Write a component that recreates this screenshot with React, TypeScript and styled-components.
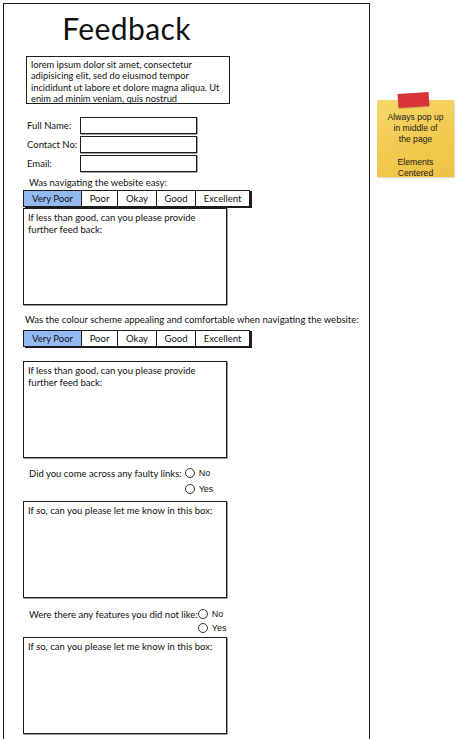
import React from "react";
import styled, { createGlobalStyle } from "styled-components";

const Global = createGlobalStyle`
  html, body { margin: 0; padding: 0; background: #fff; }
  body { font-family: "Lato", "Noto Sans", sans-serif; color: #111; overflow: hidden; }
`;

const Page = styled.div`
  display: flex;
  align-items: flex-start;
  width: 457px;
  height: 739px;
  overflow: hidden;
`;

const Frame = styled.div`
  margin: 3px 0 0 3px;
  width: 367px;
  height: 780px;
  border: 1.5px solid #1c1c1c;
  border-bottom: none;
  box-sizing: border-box;
  padding-left: 19px;
  display: flex;
  flex-direction: column;
  align-items: flex-start;
  font-size: 9.5px;
`;

const Title = styled.h1`
  margin: 7px 0 0 0;
  width: 207px;
  text-align: center;
  font-family: "Lato", sans-serif;
  font-weight: 400;
  font-size: 30px;
  line-height: 34px;
  letter-spacing: 0.4px;
`;

const Intro = styled.div`
  margin: 11px 0 0 3px;
  width: 204px;
  height: 48px;
  box-sizing: border-box;
  border: 1.5px solid #1c1c1c;
  padding: 2px 4px;
  font-size: 9.3px;
  line-height: 11.4px;
`;

const Fields = styled.div`
  margin-top: 13px;
  display: grid;
  grid-template-columns: 57px 117px;
  row-gap: 2px;
  align-items: center;
`;

const FieldLabel = styled.label`
  padding-left: 4px;
  font-size: 9.5px;
  white-space: nowrap;
`;

const Input = styled.div`
  height: 17px;
  box-sizing: border-box;
  border: 1.5px solid #1c1c1c;
  box-shadow: 0.5px 0.5px 0 #444;
`;

const Question = styled.div<{ $indent: number; $top: number }>`
  margin: ${(p) => p.$top}px 0 0 ${(p) => p.$indent}px;
  font-size: 9.5px;
  line-height: 12px;
  white-space: nowrap;
`;

const Segmented = styled.div<{ $top: number }>`
  margin-top: ${(p) => p.$top}px;
  display: flex;
  height: 17px;
  box-sizing: border-box;
  border: 1px solid #1c1c1c;
  box-shadow: 2px 1px 0 #1c1c1c;
  background: #fff;
`;

const Segment = styled.div<{ $w: number; $active?: boolean }>`
  width: ${(p) => p.$w}px;
  box-sizing: border-box;
  display: flex;
  align-items: center;
  justify-content: center;
  font-size: 9.5px;
  background: ${(p) => (p.$active ? "#94b8f0" : "#fff")};
  & + & { border-left: 1px solid #1c1c1c; }
`;

const TextBox = styled.div<{ $top: number }>`
  margin-top: ${(p) => p.$top}px;
  width: 204px;
  height: 97px;
  box-sizing: border-box;
  border: 1.5px solid #1c1c1c;
  box-shadow: 0.5px 0.5px 0 #333;
  padding: 3px 4px;
  font-size: 9.5px;
  line-height: 11.5px;
`;

const RadioRow = styled.div<{ $top: number; $gap: number; $rowGap: number }>`
  margin-top: ${(p) => p.$top}px;
  display: grid;
  grid-template-columns: auto auto;
  column-gap: ${(p) => p.$gap}px;
  row-gap: ${(p) => p.$rowGap}px;
  align-items: center;
`;

const RadioLabel = styled.div<{ $indent: number }>`
  padding-left: ${(p) => p.$indent}px;
  font-size: 9.5px;
  white-space: nowrap;
`;

const RadioOption = styled.div`
  grid-column: 2;
  display: flex;
  align-items: center;
  gap: 4px;
  font-family: "Liberation Sans", Arial, sans-serif;
  font-size: 9px;
  line-height: 12px;
`;

const Circle = styled.span`
  width: 8px;
  height: 8px;
  border: 1px solid #333;
  border-radius: 50%;
  background: #fff;
`;

const Aside = styled.div`
  margin: 93px 0 0 7px;
  position: relative;
  width: 77px;
`;

const Note = styled.div`
  margin-top: 7px;
  width: 77px;
  height: 77px;
  box-sizing: border-box;
  background: linear-gradient(160deg, #f7d86a 0%, #f2c84e 60%, #efc246 100%);
  box-shadow: 1px 1px 1px rgba(0, 0, 0, 0.12);
  padding-top: 11.5px;
  text-align: center;
  font-family: "Liberation Sans", Arial, sans-serif;
  font-size: 8.6px;
  line-height: 11.3px;
  color: #1a1a1a;
`;

const Tape = styled.div`
  position: absolute;
  left: 21px;
  top: 0px;
  width: 31px;
  height: 14px;
  background: #d9343a;
  transform: rotate(-4deg);
  box-shadow: 0 1px 1px rgba(0, 0, 0, 0.2);
`;

const ratings: [string, number][] = [
  ["Very Poor", 57],
  ["Poor", 36],
  ["Okay", 39],
  ["Good", 39],
  ["Excellent", 54],
];

const Rating = ({ top }: { top: number }) => (
  <Segmented $top={top}>
    {ratings.map(([t, w], i) => (
      <Segment key={t} $w={w} $active={i === 0}>
        {t}
      </Segment>
    ))}
  </Segmented>
);

const YesNo = ({
  label,
  indent,
  top,
  gap,
  rowGap,
}: {
  label: string;
  indent: number;
  top: number;
  gap: number;
  rowGap: number;
}) => (
  <RadioRow $top={top} $gap={gap} $rowGap={rowGap}>
    <RadioLabel $indent={indent}>{label}</RadioLabel>
    <RadioOption>
      <Circle />
      No
    </RadioOption>
    <RadioOption>
      <Circle />
      Yes
    </RadioOption>
  </RadioRow>
);

export default function App() {
  return (
    <>
      <Global />
      <Page>
        <Frame>
          <Title>Feedback</Title>
          <Intro>
            lorem ipsum dolor sit amet, consectetur adipisicing elit, sed do eiusmod tempor incididunt ut
            labore et dolore magna aliqua. Ut enim ad minim veniam, quis nostrud
          </Intro>
          <Fields>
            <FieldLabel>Full Name:</FieldLabel>
            <Input />
            <FieldLabel>Contact No:</FieldLabel>
            <Input />
            <FieldLabel>Email:</FieldLabel>
            <Input />
          </Fields>
          <Question $indent={6} $top={5}>Was navigating the website easy:</Question>
          <Rating top={1} />
          <TextBox $top={1}>
            If less than good, can you please provide
            <br />
            further feed back:
          </TextBox>
          <Question $indent={2} $top={9}>
            Was the colour scheme appealing and comfortable when navigating the website:
          </Question>
          <Rating top={4} />
          <TextBox $top={14}>
            If less than good, can you please provide
            <br />
            further feed back:
          </TextBox>
          <YesNo label="Did you come across any faulty links:" indent={6} top={9} gap={3} rowGap={4} />
          <TextBox $top={6}>If so, can you please let me know in this box:</TextBox>
          <YesNo label="Were there any features you did not like:" indent={6} top={10} gap={0} rowGap={2} />
          <TextBox $top={3}>If so, can you please let me know in this box:</TextBox>
        </Frame>
        <Aside>
          <Tape />
          <Note>
            Always pop up
            <br />
            in middle of
            <br />
            the page
            <br />
            <br />
            Elements
            <br />
            Centered
          </Note>
        </Aside>
      </Page>
    </>
  );
}
